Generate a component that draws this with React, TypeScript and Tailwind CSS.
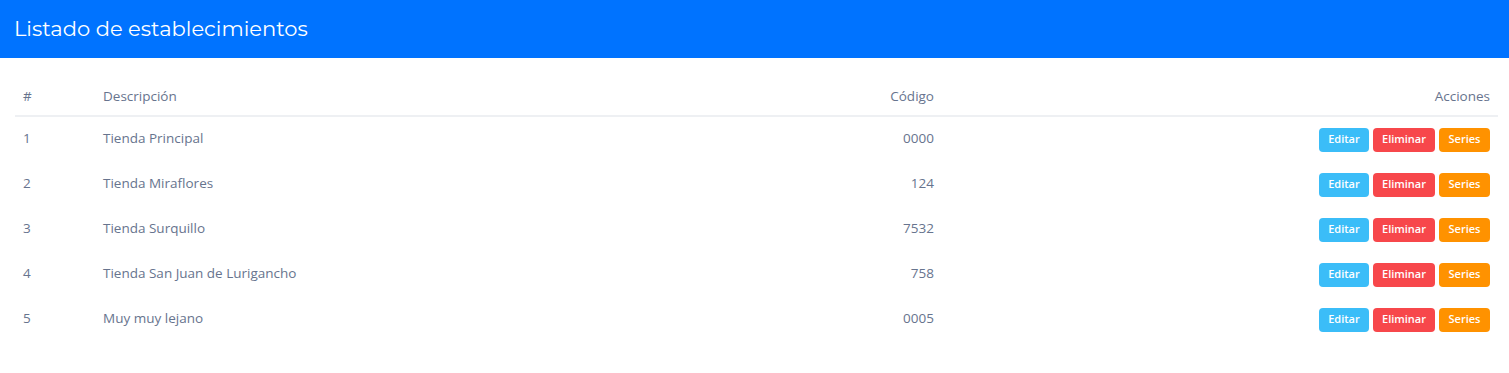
const establecimientos = [
  { id: 1, descripcion: "Tienda Principal", codigo: "0000" },
  { id: 2, descripcion: "Tienda Miraflores", codigo: "124" },
  { id: 3, descripcion: "Tienda Surquillo", codigo: "7532" },
  { id: 4, descripcion: "Tienda San Juan de Lurigancho", codigo: "758" },
  { id: 5, descripcion: "Muy muy lejano", codigo: "0005" },
];

const cols = "grid grid-cols-[80px_1fr_160px_556px]";

export default function App() {
  return (
    <div className="min-h-[373px] bg-white font-['Open_Sans',sans-serif] text-[13.5px] text-[#67748e]">
      <div className="h-[58px] bg-[#0073ff] flex items-center px-[14px]">
        <h1 className="text-white text-[21px] font-['Montserrat','Lato',sans-serif]">Listado de establecimientos</h1>
      </div>
      <div className="pl-[15px] pr-[11px] pt-[19px]">
        <div className={`${cols} h-[40px] items-center border-b-2 border-[#eef0f3]`}>
          <div className="px-2">#</div>
          <div className="px-2">Descripción</div>
          <div className="px-2 text-right">Código</div>
          <div className="px-2 text-right">Acciones</div>
        </div>
        {establecimientos.map((e) => (
          <div key={e.id} className={`${cols} h-[45px] items-center`}>
            <div className="px-2 -mt-[2px]">{e.id}</div>
            <div className="px-2 -mt-[2px]">{e.descripcion}</div>
            <div className="px-2 -mt-[2px] text-right">{e.codigo}</div>
            <div className="px-2 flex justify-end gap-1 text-[11px] font-semibold text-white">
              <button className="h-6 w-[50px] rounded bg-[#3bbdf8]">Editar</button>
              <button className="h-6 w-[62px] rounded bg-[#f7474b]">Eliminar</button>
              <button className="h-6 w-[51px] rounded bg-[#ff9200]">Series</button>
            </div>
          </div>
        ))}
      </div>
    </div>
  );
}
